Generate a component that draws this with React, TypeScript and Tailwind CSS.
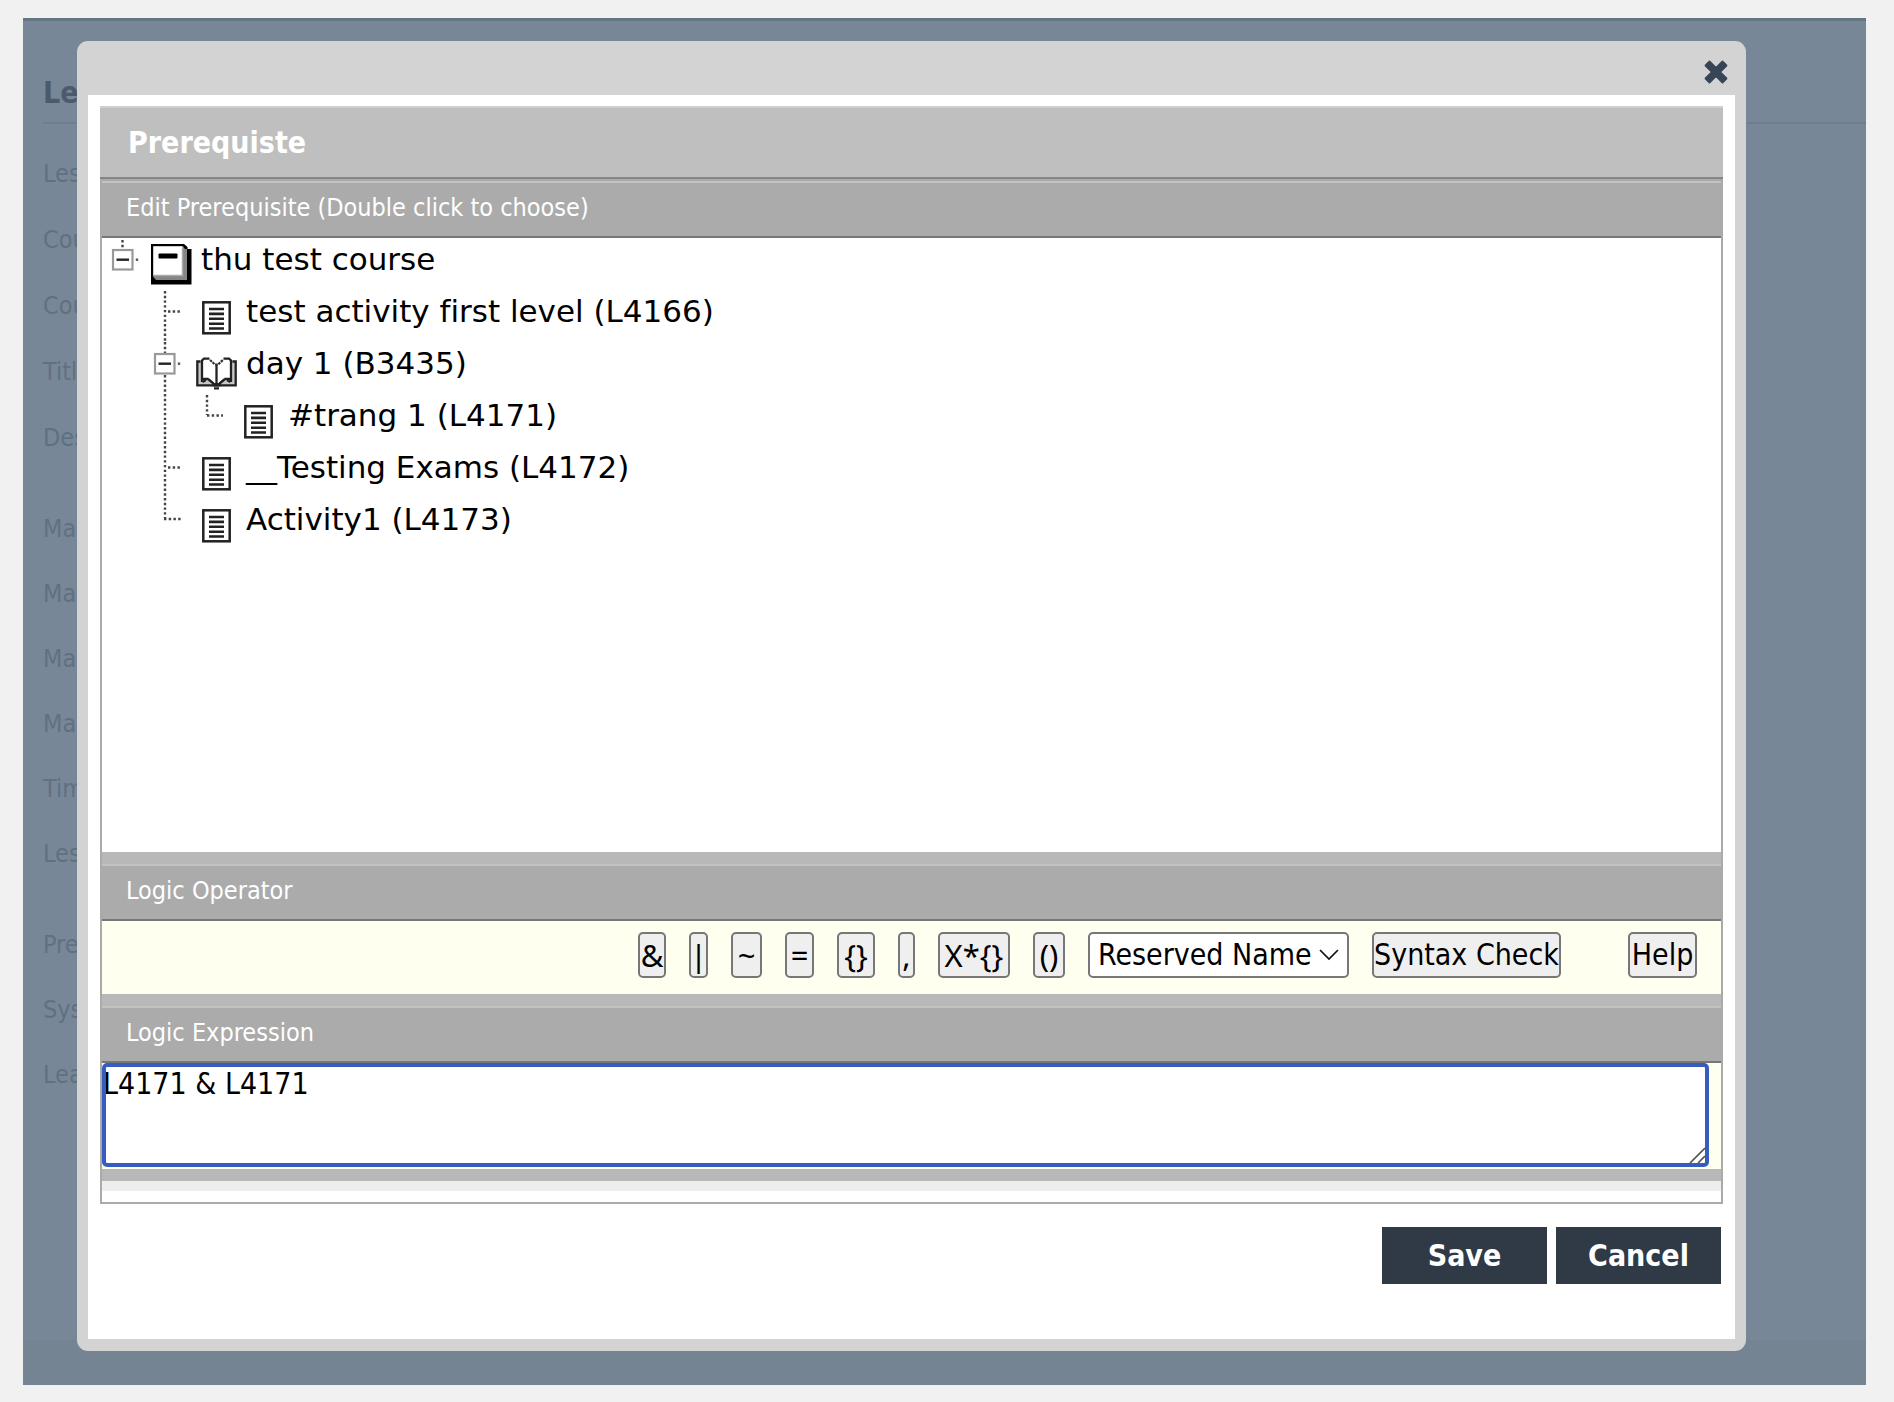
import type { ReactNode } from 'react';

const fieldGroups = [
  { rowHeight: 'h-[66px]', names: ['Les', 'Cou', 'Cou', 'Title', 'Des'] },
  { rowHeight: 'h-[65px]', names: ['Ma', 'Ma', 'Ma', 'Ma', 'Tim', 'Les'] },
  { rowHeight: 'h-[65px]', names: ['Pre', 'Sys', 'Lea'] },
];

const operators = [
  { label: '&', width: 'w-[28px]' },
  { label: '|', width: 'w-[19px]' },
  { label: '~', width: 'w-[31px]' },
  { label: '=', width: 'w-[29px]' },
  { label: '{}', width: 'w-[38px]' },
  { label: ',', width: 'w-[17px]' },
  { label: 'X*{}', width: 'w-[72px]' },
  { label: '()', width: 'w-[32px]' },
];

const buttonStyle =
  'flex h-[46px] items-center justify-center rounded-[5px] border-2 border-[#777777] bg-[#efefef] whitespace-nowrap text-black';

function Dots({ d }: { d: string }) {
  return <path d={d} stroke="#444" strokeWidth="2.4" strokeDasharray="2.4 2.33" fill="none" />;
}

function Collapse({ x, y }: { x: number; y: number }) {
  return (
    <g>
      <rect x={x + 1} y={y + 1} width="19.5" height="19.5" fill="#fff" stroke="#999" strokeWidth="2.2" />
      <path d={`M${x + 4.5} ${y + 10.7}h12.5`} stroke="#222" strokeWidth="2.4" />
      <path d={`M${x + 23.8} ${y + 10.7}h2.4`} stroke="#555" strokeWidth="2.4" />
    </g>
  );
}

function Gutter({ width, children }: { width: number; children: ReactNode }) {
  return (
    <svg width={width} height="52" className="shrink-0" aria-hidden="true">
      {children}
    </svg>
  );
}

function CourseIcon() {
  return (
    <svg width="41" height="41" viewBox="0 0 41 41" className="mt-[6px]" aria-hidden="true">
      <path d="M0 0H33L36.500 3V5H40.500V40.500H0Z" fill="#000" />
      <path d="M2.300 2.300H32L34 5H36V36H5L2.300 33Z" fill="#858585" />
      <path d="M2.300 2.300H31.500V31.500H2.300Z" fill="#fff" />
      <path d="M31.500 3.500V31.500H2.300" stroke="#aaa" strokeWidth="1.500" fill="none" />
      <rect x="7.500" y="9.500" width="19" height="5" rx="1" fill="#000" />
    </svg>
  );
}

function PageIcon() {
  return (
    <svg width="29" height="34" viewBox="0 0 29 34" className="mt-[11px]" aria-hidden="true">
      <rect x="1.300" y="1.300" width="26.400" height="31" fill="#fff" stroke="#222" strokeWidth="2.500" />
      <path d="M7 8H22M7 12.900H22M7 17.800H22M7 22.700H22M7 27.500H22" stroke="#222" strokeWidth="2.600" />
    </svg>
  );
}

function BookIcon() {
  return (
    <svg width="41" height="33" viewBox="0 0 41 33" className="mt-[15px]" aria-hidden="true">
      <path d="M1.300 4.500H6V28H1.300ZM35 4.500H39.700V28H35Z" fill="#c8c8c8" />
      <path d="M6 24H35V28H6Z" fill="#c8c8c8" />
      <path d="M6 3.500L7.500 1.800H13L20.500 8.500L28 1.800H33.500L35 3.500V22.500H29L24.500 27H16.500L12 22.500H6Z" fill="#fff" />
      <path
        d="M6 25V3.500L8 1.600H13.500M27.500 1.600H33L35 3.500V25M4.500 4.500H1.300V28.300H39.700V4.500H36.500M6 22H12.500M35 22H28.500M20.500 7V28"
        fill="none"
        stroke="#222"
        strokeWidth="2.300"
      />
      <path d="M14 3L19 7.500H22L27 3" fill="none" stroke="#333" strokeWidth="2.200" strokeDasharray="2.600 0.800" />
      <path d="M6.500 25L10 23M34.500 25L31 23M12 22L17.500 26.500M29 22L23.500 26.500" stroke="#222" strokeWidth="2.400" />
      <path d="M16.500 26H24.500V29.500H16.500ZM18 30.300H23V32.500H18Z" fill="#222" />
    </svg>
  );
}

function TreeRow({ gutter, icon, label }: { gutter: ReactNode; icon: ReactNode; label: string }) {
  return (
    <li className="flex h-[52px] items-start">
      {gutter}
      <span className="flex w-[42px] shrink-0 justify-center">{icon}</span>
      <span className="ml-[9px] leading-[43px] whitespace-nowrap">{label}</span>
    </li>
  );
}

function Band({ children }: { children: ReactNode }) {
  return (
    <h2 className="border-t-2 border-b-2 border-t-[#c2c2c2] border-b-[#777777] bg-[#ababab] px-6 pt-2 pb-3 text-[25px] leading-[33px] text-white">
      {children}
    </h2>
  );
}

function Spacer() {
  return <div className="h-[12px] bg-[#b8b8b8]" />;
}

export default function App() {
  return (
    <div className="min-h-screen bg-[#f1f1f1] pt-[18px] pr-7 pb-[19px] pl-[23px] font-['DejaVu_Sans_Condensed','DejaVu_Sans',sans-serif] [font-stretch:condensed] [font-variant-ligatures:none]">
      <div className="grid grid-cols-1 overflow-hidden border-t-[3px] border-[#647583] bg-[#778797]">
        <div className="flex flex-col text-[25px] leading-[33px] text-[#5f7181] [grid-area:1/1]">
          <div className="ml-5 border-b-2 border-[#6d7e8e] pt-[54px] pb-[12px] text-[30px] leading-[35px] font-bold text-[#4a5b6c]">
            <h1 className="w-[34px]">Les</h1>
          </div>
          <div className="ml-5 flex w-[34px] flex-col gap-[26px] pt-[16px]">
            {fieldGroups.map((group, i) => (
              <ul key={i}>
                {group.names.map((name, j) => (
                  <li key={j} className={`flex items-center ${group.rowHeight}`}>
                    {name}
                  </li>
                ))}
              </ul>
            ))}
          </div>
          <div className="mt-auto h-[45px] bg-[#748493]" />
        </div>

        <div
          role="dialog"
          aria-labelledby="dialog-title"
          className="z-10 mt-5 mr-[120px] mb-[34px] ml-[54px] rounded-[11px] bg-[#d3d3d3] px-[11px] pb-[12px] [grid-area:1/1]"
        >
          <div className="flex h-[54px] items-center justify-end pr-[7px]">
            <button type="button" aria-label="Close" className="mt-[7px]">
              <svg width="24" height="24" viewBox="0 0 24 24" aria-hidden="true">
                <path
                  d="M5.500 1.500L12 8L18.500 1.500L22.500 5.500L16 12L22.500 18.500L18.500 22.500L12 16L5.500 22.500L1.500 18.500L8 12L1.500 5.500Z"
                  fill="#374557"
                  stroke="#374557"
                  strokeWidth="1.800"
                  strokeLinejoin="round"
                />
              </svg>
            </button>
          </div>

          <div className="bg-white px-[12px] pt-[11px] pb-[55px]">
            <div className="border-t-2 border-b-2 border-t-[#cfcfcf] border-b-[#858585] bg-[#bfbfbf] px-7 py-4">
              <h1 id="dialog-title" className="text-[30px] leading-[37px] font-bold text-white">
                Prerequiste
              </h1>
            </div>
            <div className="border-2 border-[#aaaaaa]">
              <Band>Edit Prerequisite (Double click to choose)</Band>
              <ul className="min-h-[614px] bg-white font-['DejaVu_Sans',sans-serif] text-[31px] text-black [font-stretch:normal]">
                <TreeRow
                  label="thu test course"
                  icon={<CourseIcon />}
                  gutter={
                    <Gutter width={48}>
                      <Dots d="M20.500 2V11" />
                      <Collapse x={10} y={11} />
                    </Gutter>
                  }
                />
                <TreeRow
                  label="test activity first level (L4166)"
                  icon={<PageIcon />}
                  gutter={
                    <Gutter width={93}>
                      <Dots d="M63 1V52M66 21.500H79" />
                    </Gutter>
                  }
                />
                <TreeRow
                  label="day 1 (B3435)"
                  icon={<BookIcon />}
                  gutter={
                    <Gutter width={93}>
                      <Dots d="M63 0V52" />
                      <Collapse x={52} y={11} />
                    </Gutter>
                  }
                />
                <TreeRow
                  label="#trang 1 (L4171)"
                  icon={<PageIcon />}
                  gutter={
                    <Gutter width={135}>
                      <Dots d="M63 0V52M105 1V21M105 21.500H121" />
                    </Gutter>
                  }
                />
                <TreeRow
                  label="__Testing Exams (L4172)"
                  icon={<PageIcon />}
                  gutter={
                    <Gutter width={93}>
                      <Dots d="M63 0V52M66 21.500H79" />
                    </Gutter>
                  }
                />
                <TreeRow
                  label="Activity1 (L4173)"
                  icon={<PageIcon />}
                  gutter={
                    <Gutter width={93}>
                      <Dots d="M63 0V20M62 21H79" />
                    </Gutter>
                  }
                />
              </ul>
              <Spacer />
              <Band>Logic Operator</Band>
              <div className="flex items-center justify-end gap-[23px] bg-[#fffff0] pt-[11px] pr-6 pb-[16px] text-[30px] leading-[40px]">
                {operators.map((op) => (
                  <button
                    key={op.label}
                    type="button"
                    className={`${buttonStyle} ${op.width} font-['Noto_Sans',sans-serif] text-[31px]`}
                  >
                    {op.label}
                  </button>
                ))}
                <div className="relative">
                  <select
                    aria-label="Reserved Name"
                    className="block h-[46px] w-[261px] appearance-none rounded-[5px] border-2 border-[#777777] bg-white pl-2 text-black"
                  >
                    <option>Reserved Name</option>
                  </select>
                  <svg
                    width="20"
                    height="12"
                    viewBox="0 0 20 12"
                    className="pointer-events-none absolute top-[17px] right-[10px]"
                    aria-hidden="true"
                  >
                    <path d="M1 1L10 10L19 1" fill="none" stroke="#111" strokeWidth="1.700" />
                  </svg>
                </div>
                <button type="button" className={`${buttonStyle} w-[189px]`}>
                  Syntax Check
                </button>
                <button type="button" className={`${buttonStyle} ml-[44px] w-[69px]`}>
                  Help
                </button>
              </div>
              <Spacer />
              <Band>Logic Expression</Band>
              <div className="bg-[#fffff0] pr-3 pb-[2px]">
                <div className="relative">
                  <textarea
                    aria-label="Logic Expression"
                    defaultValue="L4171 & L4171"
                    className="block h-[104px] w-full resize-none rounded-[5px] bg-white pt-[3px] pl-[1px] text-[30px] leading-[36px] text-black outline-4 -outline-offset-4 outline-[#365cc0]"
                  />
                  <svg
                    width="16"
                    height="16"
                    viewBox="0 0 16 16"
                    className="pointer-events-none absolute right-[4px] bottom-[4px]"
                    aria-hidden="true"
                  >
                    <path d="M1 16L16 1M9 16L16 9" stroke="#555" strokeWidth="1.700" />
                  </svg>
                </div>
              </div>
              <Spacer />
              <div className="h-[10px] bg-[#eeeeee]" />
              <div className="h-[11px] bg-white" />
            </div>
            <div className="mt-[23px] flex justify-end gap-[9px] pr-[2px] text-[30px] leading-[39px] font-bold text-white">
              <button type="button" className="h-[57px] w-[165px] bg-[#303a46]">
                Save
              </button>
              <button type="button" className="h-[57px] w-[165px] bg-[#303a46]">
                Cancel
              </button>
            </div>
          </div>
        </div>
      </div>
    </div>
  );
}
